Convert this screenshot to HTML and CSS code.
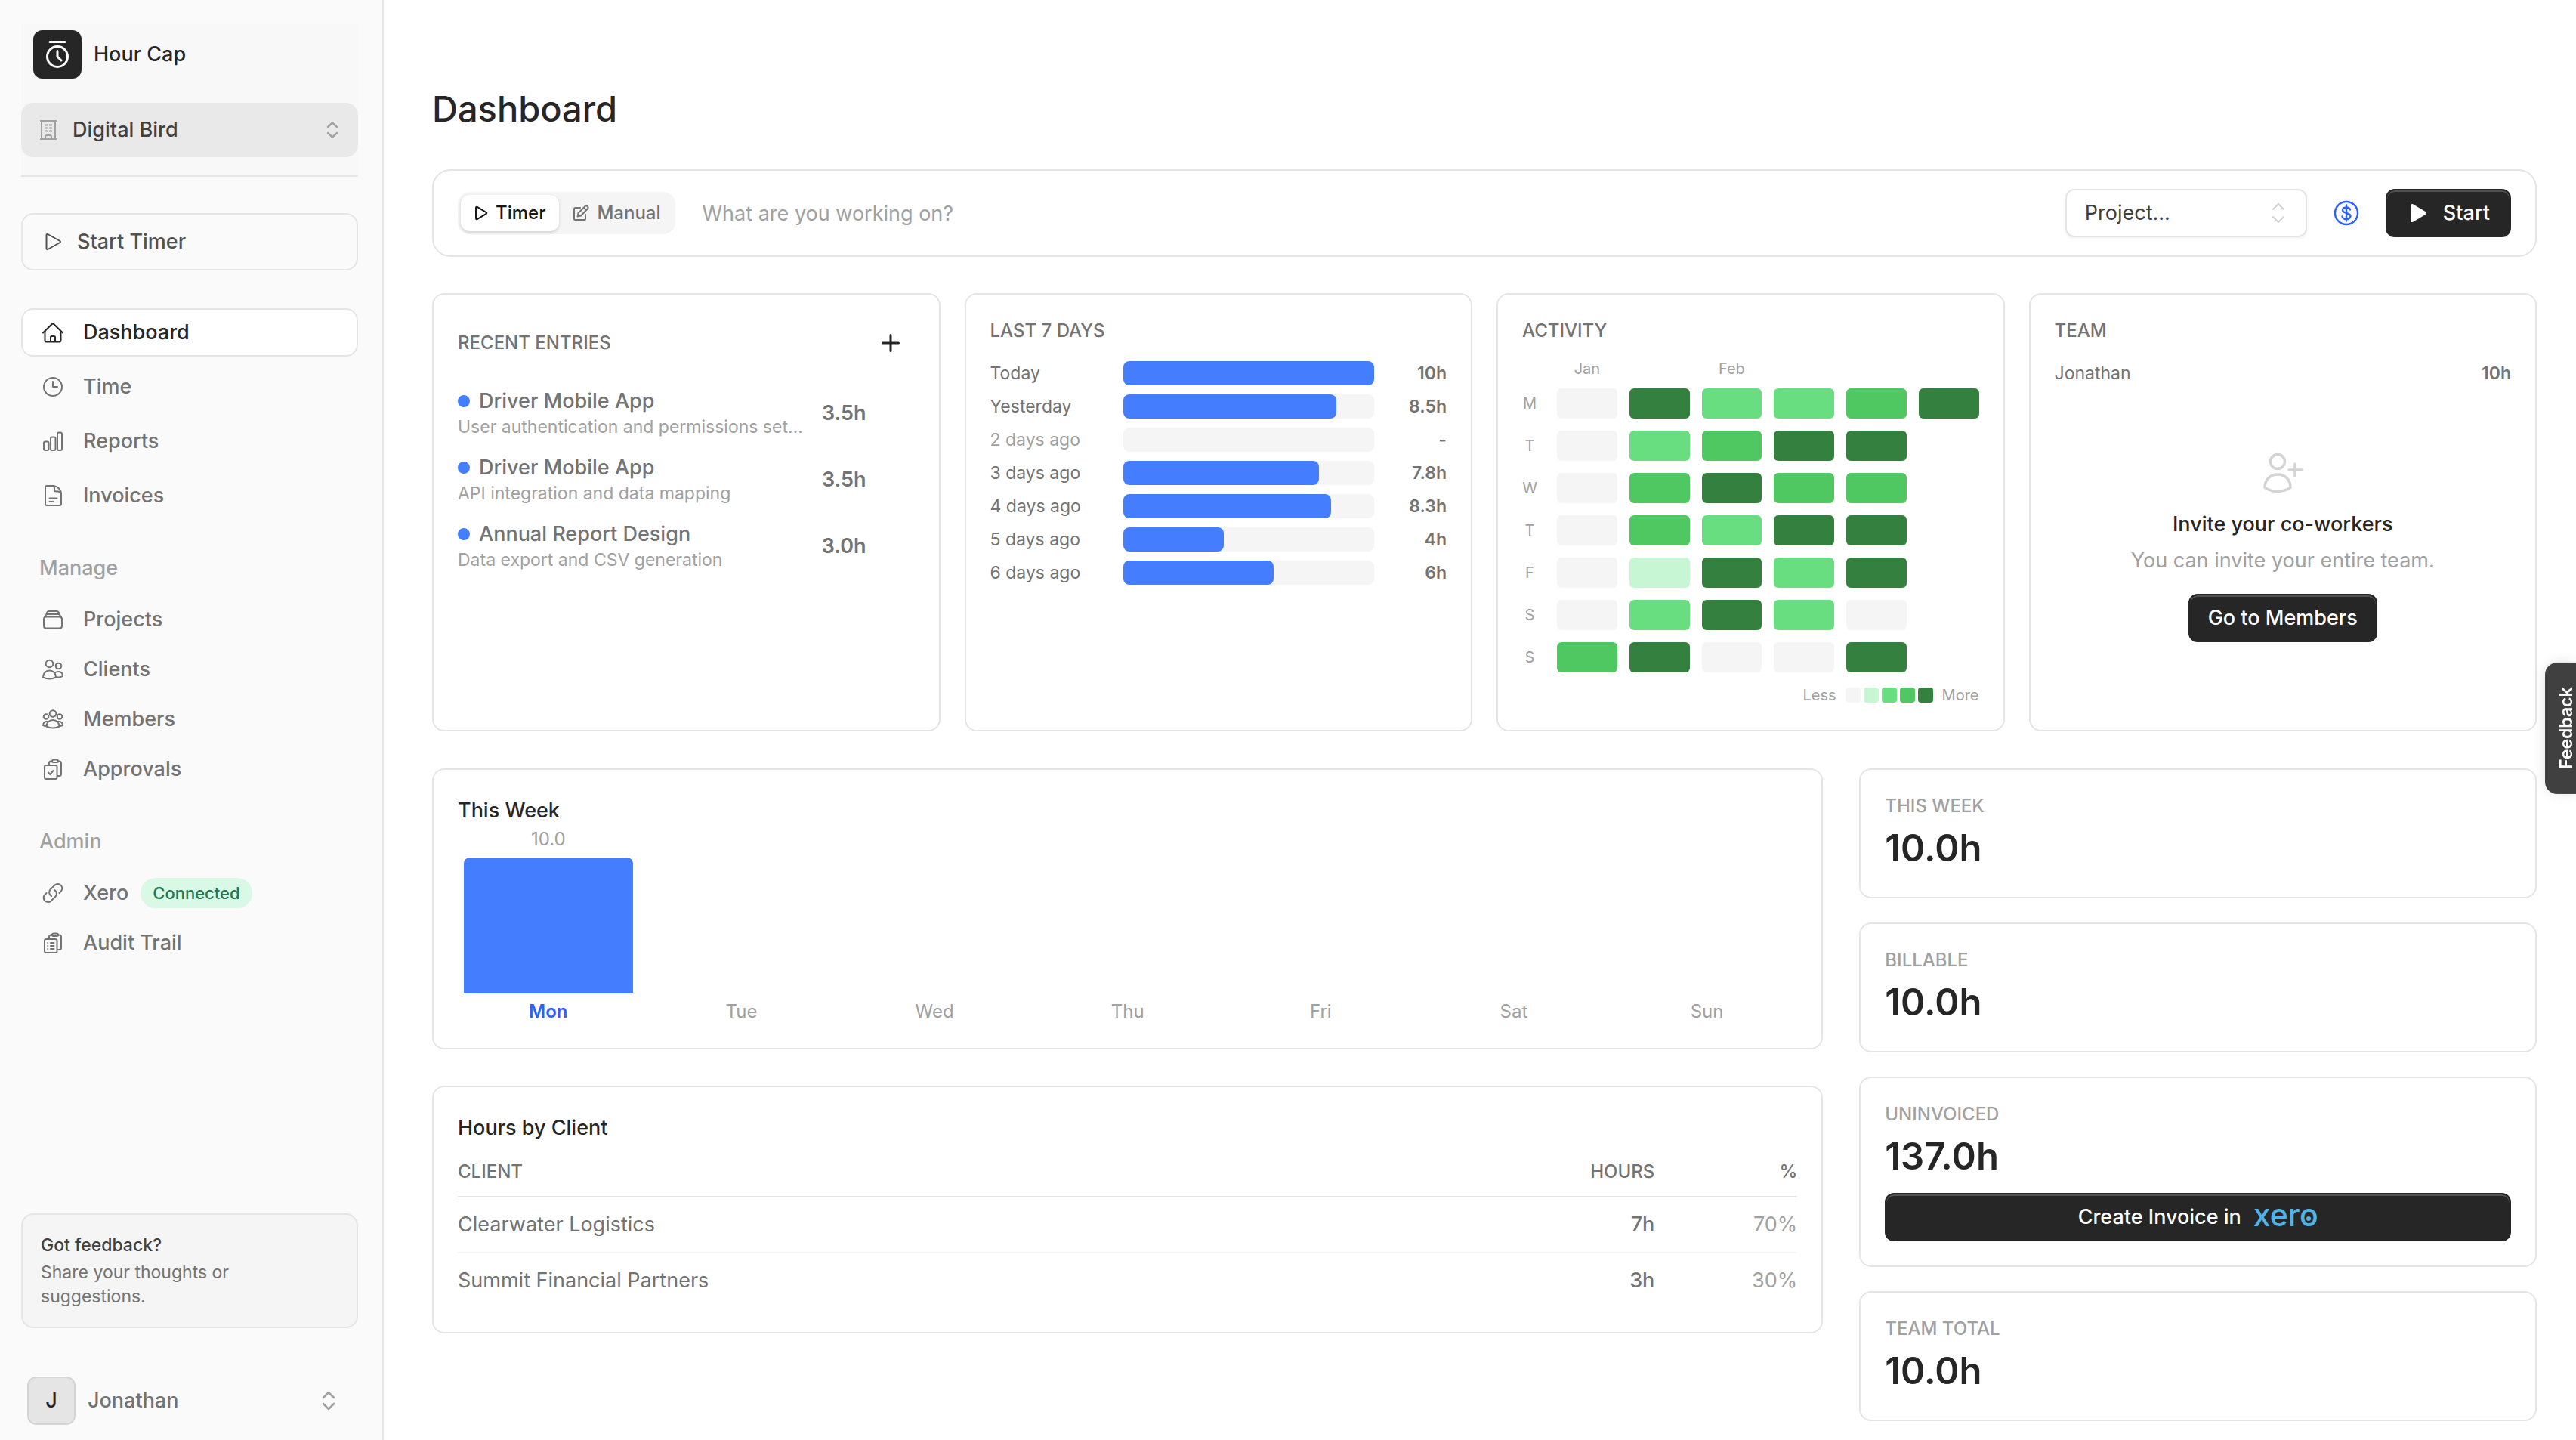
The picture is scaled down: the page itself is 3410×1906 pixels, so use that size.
FILE: index.html
```html
<!DOCTYPE html>
<html lang="en">
<head>
    <meta charset="UTF-8">
    <meta name="viewport" content="width=device-width, initial-scale=1.0">
    <title>Dashboard - Hour Cap</title>
    <link rel="stylesheet" href="styles.css">
</head>
<body>
    <aside class="sidebar">
        <div class="sidebar-header">
            <div class="brand">
                <span class="brand-logo">
                    <svg width="32" height="40" viewBox="0 0 32 40" fill="none" stroke="#fff" stroke-width="3" stroke-linecap="round" stroke-linejoin="round">
                        <path d="M6 3.5h20"/>
                        <circle cx="16" cy="23" r="13.5"/>
                        <path d="M16 15.5V23l5 5"/>
                    </svg>
                </span>
                <span class="brand-name">Hour Cap</span>
            </div>
            <button class="org-button" type="button">
                <svg class="org-icon" width="24" height="28" viewBox="0 0 24 28" fill="none" stroke="currentColor" stroke-width="2">
                    <path d="M1 2h22M1 26h22M3 2v24M21 2v24M8 26v-3a2 2 0 0 1 2-2h4a2 2 0 0 1 2 2v3"/>
                    <path d="M7 7.500h4M13 7.500h4M7 11.500h4M13 11.500h4M7 15.500h4M13 15.500h4"/>
                </svg>
                <span>Digital Bird</span>
                <svg class="chevrons" width="16" height="24" viewBox="0 0 16 24" fill="none" stroke="currentColor" stroke-width="2.4" stroke-linecap="round" stroke-linejoin="round">
                    <path d="M2 8l6-5.500L14 8M2 16l6 5.500 6-5.500"/>
                </svg>
            </button>
        </div>

        <button class="start-timer" type="button">
            <svg width="22" height="24" viewBox="0 0 22 24" fill="none" stroke="currentColor" stroke-width="2" stroke-linejoin="round">
                <path d="M1.500 3.200v17.600c0 1 .9 1.600 1.800 1.200l16-9c.9-.5.9-1.500 0-2l-16-9c-.9-.4-1.800.2-1.800 1.200z"/>
            </svg>
            <span>Start Timer</span>
        </button>

        <nav class="nav nav-main">
            <a class="nav-link active" href="#">
                <svg width="28" height="28" viewBox="0 0 28 28" fill="none" stroke="currentColor" stroke-width="2" stroke-linecap="round" stroke-linejoin="round">
                    <path d="M1 14.500L12.500 3.200a2.100 2.100 0 0 1 3 0L27 14.500"/>
                    <path d="M3.500 12.500V25a1.500 1.500 0 0 0 1.500 1.500h18a1.500 1.500 0 0 0 1.500-1.500V12.500M11 26.500v-6a1.500 1.500 0 0 1 1.500-1.500h3a1.500 1.500 0 0 1 1.500 1.500v6"/>
                </svg>
                <span>Dashboard</span>
            </a>
            <a class="nav-link" href="#">
                <svg width="28" height="28" viewBox="0 0 28 28" fill="none" stroke="currentColor" stroke-width="2" stroke-linecap="round" stroke-linejoin="round">
                    <circle cx="14" cy="14" r="12"/>
                    <path d="M14 7v7h6"/>
                </svg>
                <span>Time</span>
            </a>
            <a class="nav-link" href="#">
                <svg width="28" height="28" viewBox="0 0 28 28" fill="none" stroke="currentColor" stroke-width="2">
                    <rect x="2" y="14.500" width="6.500" height="11.500" rx="2"/>
                    <rect x="11" y="8.500" width="6.500" height="17.500" rx="2"/>
                    <rect x="20" y="2.500" width="6" height="23.500" rx="2"/>
                </svg>
                <span>Reports</span>
            </a>
            <a class="nav-link" href="#">
                <svg width="28" height="28" viewBox="0 0 28 28" fill="none" stroke="currentColor" stroke-width="2" stroke-linecap="round" stroke-linejoin="round">
                    <path d="M4 3a2 2 0 0 1 2-2h7.500C20 1 25 6 25 12.500V25a2 2 0 0 1-2 2H6a2 2 0 0 1-2-2z"/>
                    <path d="M13.500 1c2 0 2.500 1.500 2.500 3v2.500a2 2 0 0 0 2 2h2.500c3 0 4.500 1.500 4.500 4M9.500 17.500h10M9.500 22h5"/>
                </svg>
                <span>Invoices</span>
            </a>
        </nav>

        <h2 class="nav-title">Manage</h2>
        <nav class="nav">
            <a class="nav-link" href="#">
                <svg width="28" height="28" viewBox="0 0 28 28" fill="none" stroke="currentColor" stroke-width="2" stroke-linecap="round" stroke-linejoin="round">
                    <rect x="2" y="10.500" width="24" height="15" rx="3"/>
                    <path d="M3 11.500l1-2.500a3 3 0 0 1 2.500-2h15a3 3 0 0 1 2.500 2l1 2.500M5.500 7l.5-1.500a3 3 0 0 1 2.800-2.500h10.400A3 3 0 0 1 22 5.500l.5 1.500"/>
                </svg>
                <span>Projects</span>
            </a>
            <a class="nav-link" href="#">
                <svg width="28" height="28" viewBox="0 0 28 28" fill="none" stroke="currentColor" stroke-width="2" stroke-linecap="round" stroke-linejoin="round">
                    <circle cx="9.500" cy="6.500" r="4.800"/>
                    <circle cx="21.500" cy="9.500" r="3.800"/>
                    <path d="M1 24.500C1 19 4.500 15.500 9.500 15.500S18 19 18 24.500c-5 2.300-12 2.300-17 0z"/>
                    <path d="M16.500 18.500c1.300-1 3-1.500 5-1.500 3.500 0 5.500 2.500 5.500 6-2.500 1.500-6 1.500-9 1.300"/>
                </svg>
                <span>Clients</span>
            </a>
            <a class="nav-link" href="#">
                <svg width="28" height="28" viewBox="0 0 28 28" fill="none" stroke="currentColor" stroke-width="2" stroke-linecap="round" stroke-linejoin="round">
                    <circle cx="14" cy="6.500" r="4.300"/>
                    <circle cx="5" cy="10.500" r="3.300"/>
                    <circle cx="23" cy="10.500" r="3.300"/>
                    <path d="M5.500 23.500c0-5 3.500-8.500 8.500-8.500s8.500 3.500 8.500 8.500c-5 2.700-12 2.700-17 0z"/>
                    <path d="M7 17c-3.500-.5-6 1.700-6 5 1.300.6 2.800.8 4.500.9M21 17c3.500-.5 6 1.700 6 5-1.300.6-2.800.8-4.500.9"/>
                </svg>
                <span>Members</span>
            </a>
            <a class="nav-link" href="#">
                <svg width="28" height="28" viewBox="0 0 28 28" fill="none" stroke="currentColor" stroke-width="2" stroke-linecap="round" stroke-linejoin="round">
                    <rect x="3" y="9" width="16.500" height="18" rx="2"/>
                    <path d="M9 8.500V6a2.500 2.500 0 0 1 2.500-2.500H13M21 3.500h1.500A2.500 2.500 0 0 1 25 6v14.500a2.500 2.500 0 0 1-2.500 2.500H20"/>
                    <path d="M13 3.500a2 2 0 0 1 2-2h4a2 2 0 0 1 2 2v0a1.500 1.500 0 0 1-1.500 1.500h-5A1.500 1.500 0 0 1 13 3.500zM8 18.500l2.300 2.500 4.200-5"/>
                </svg>
                <span>Approvals</span>
            </a>
        </nav>

        <h2 class="nav-title">Admin</h2>
        <nav class="nav">
            <a class="nav-link" href="#">
                <svg width="28" height="28" viewBox="0 0 28 28" fill="none" stroke="currentColor" stroke-width="2" stroke-linecap="round" stroke-linejoin="round">
                    <path d="M12 18a5.500 5.500 0 0 1-1.500-8.500l6-6a5.800 5.800 0 0 1 8.200 8.200l-2.200 2.300"/>
                    <path d="M16 10a5.500 5.500 0 0 1 1.500 8.500l-6 6a5.800 5.800 0 0 1-8.200-8.200L5.500 14"/>
                </svg>
                <span>Xero</span>
                <span class="badge">Connected</span>
            </a>
            <a class="nav-link" href="#">
                <svg width="28" height="28" viewBox="0 0 28 28" fill="none" stroke="currentColor" stroke-width="2" stroke-linecap="round" stroke-linejoin="round">
                    <rect x="3" y="9" width="16.500" height="18" rx="2"/>
                    <path d="M9 8.500V6a2.500 2.500 0 0 1 2.500-2.500H13M21 3.500h1.500A2.500 2.500 0 0 1 25 6v14.500a2.500 2.500 0 0 1-2.500 2.500H20"/>
                    <path d="M13 3.500a2 2 0 0 1 2-2h4a2 2 0 0 1 2 2v0a1.500 1.500 0 0 1-1.500 1.500h-5A1.500 1.500 0 0 1 13 3.500zM11 14h4.500M11 18h4.500M11 22h4.500M7.200 14h.1M7.200 18h.1M7.200 22h.1"/>
                </svg>
                <span>Audit Trail</span>
            </a>
        </nav>

        <div class="sidebar-footer">
            <div class="feedback-card">
                <p class="feedback-title">Got feedback?</p>
                <p class="feedback-text">Share your thoughts or<br>suggestions.</p>
            </div>
            <button class="user" type="button">
                <span class="avatar">J</span>
                <span>Jonathan</span>
                <svg class="chevrons" width="18" height="26" viewBox="0 0 18 26" fill="none" stroke="currentColor" stroke-width="2.600" stroke-linecap="round" stroke-linejoin="round">
                    <path d="M2 9l7-7 7 7M2 17l7 7 7-7"/>
                </svg>
            </button>
        </div>
    </aside>

    <main class="main">
        <h1>Dashboard</h1>

        <!-- Timer bar -->
        <form class="timer-bar">
            <div class="toggle">
                <button class="toggle-button selected" type="button">
                    <svg width="18" height="20" viewBox="0 0 18 20" fill="none" stroke="currentColor" stroke-width="2" stroke-linejoin="round">
                        <path d="M2 3v14c0 1 .9 1.500 1.700 1.100l12-7.200c.8-.5.8-1.300 0-1.800l-12-7.200C2.900 1.500 2 2 2 3z"/>
                    </svg>
                    Timer
                </button>
                <button class="toggle-button" type="button">
                    <svg width="22" height="22" viewBox="0 0 22 22" fill="none" stroke="currentColor" stroke-width="2" stroke-linecap="round" stroke-linejoin="round">
                        <path d="M10 4H3.500A1.500 1.500 0 0 0 2 5.500v13A1.500 1.500 0 0 0 3.500 20h12a1.500 1.500 0 0 0 1.500-1.500V13"/>
                        <path d="M6.500 15.500l1-4.500 9.300-9.300a1.600 1.600 0 0 1 2.300 0l1 1a1.600 1.600 0 0 1 0 2.300L11 14.500zM15 4l3 3"/>
                    </svg>
                    Manual
                </button>
            </div>
            <input class="task-input" type="text" aria-label="Task" placeholder="What are you working on?">
            <div class="select-wrap">
                <select class="project-select" aria-label="Project">
                    <option>Project...</option>
                </select>
                <svg class="select-arrows" width="20" height="28" viewBox="0 0 20 28" fill="none" stroke="currentColor" stroke-width="2.400" stroke-linecap="round" stroke-linejoin="round">
                    <path d="M3 9l7-7 7 7M3 19l7 7 7-7"/>
                </svg>
            </div>
            <button class="billable" type="button" aria-label="Billable">
                <svg width="34" height="34" viewBox="0 0 34 34" fill="none" stroke="currentColor" stroke-width="2.400" stroke-linecap="round" stroke-linejoin="round">
                    <circle cx="17" cy="17" r="15"/>
                    <path d="M17 6.500v21M22 12.500c-.5-2-2.500-3-5-3s-5 1.200-5 3.500c0 2.500 2.500 3.200 5 4s5.500 1.500 5.500 4-2.500 4-5.500 4-5-1.300-5.500-3.500"/>
                </svg>
            </button>
            <button class="button start-button" type="button">
                <svg width="22" height="26" viewBox="0 0 22 26" fill="currentColor">
                    <path d="M1 3v20c0 1.800 1.700 2.600 3.200 1.800l16-9.500c1.700-1 1.700-3.600 0-4.600l-16-9.500C2.700.4 1 1.200 1 3z"/>
                </svg>
                Start
            </button>
        </form>

        <section class="top-cards">
            <div class="card">
                <div class="recent-header">
                    <h3 class="card-label">Recent Entries</h3>
                    <button class="add-button" type="button" aria-label="Add entry">
                        <svg width="24" height="24" viewBox="0 0 24 24" fill="none" stroke="currentColor" stroke-width="3" stroke-linecap="round">
                            <path d="M12 1.500v21M1.500 12h21"/>
                        </svg>
                    </button>
                </div>
                <ul class="entries">
                    <li class="entry">
                        <div>
                            <p class="entry-name"><span class="dot"></span>Driver Mobile App</p>
                            <p class="entry-note">User authentication and permissions set…</p>
                        </div>
                        <span class="entry-time">3.5h</span>
                    </li>
                    <li class="entry">
                        <div>
                            <p class="entry-name"><span class="dot"></span>Driver Mobile App</p>
                            <p class="entry-note">API integration and data mapping</p>
                        </div>
                        <span class="entry-time">3.5h</span>
                    </li>
                    <li class="entry">
                        <div>
                            <p class="entry-name"><span class="dot"></span>Annual Report Design</p>
                            <p class="entry-note">Data export and CSV generation</p>
                        </div>
                        <span class="entry-time">3.0h</span>
                    </li>
                </ul>
            </div>

            <div class="card">
                <h3 class="card-label">Last 7 Days</h3>
                <ul class="days">
                    <li class="day"><span>Today</span><div class="track"><div class="fill" style="width: 100%"></div></div><b>10h</b></li>
                    <li class="day"><span>Yesterday</span><div class="track"><div class="fill" style="width: 85%"></div></div><b>8.5h</b></li>
                    <li class="day"><span class="muted">2 days ago</span><div class="track"></div><b>-</b></li>
                    <li class="day"><span>3 days ago</span><div class="track"><div class="fill" style="width: 78%"></div></div><b>7.8h</b></li>
                    <li class="day"><span>4 days ago</span><div class="track"><div class="fill" style="width: 83%"></div></div><b>8.3h</b></li>
                    <li class="day"><span>5 days ago</span><div class="track"><div class="fill" style="width: 40%"></div></div><b>4h</b></li>
                    <li class="day"><span>6 days ago</span><div class="track"><div class="fill" style="width: 60%"></div></div><b>6h</b></li>
                </ul>
            </div>

            <div class="card">
                <h3 class="card-label">Activity</h3>
                <div class="heatmap">
                    <span></span><span class="month">Jan</span><span></span><span class="month">Feb</span><span></span><span></span><span></span>
                    <span class="weekday">M</span><i class="l0"></i><i class="l4"></i><i class="l2"></i><i class="l2"></i><i class="l3"></i><i class="l4"></i>
                    <span class="weekday">T</span><i class="l0"></i><i class="l2"></i><i class="l3"></i><i class="l4"></i><i class="l4"></i><i></i>
                    <span class="weekday">W</span><i class="l0"></i><i class="l3"></i><i class="l4"></i><i class="l3"></i><i class="l3"></i><i></i>
                    <span class="weekday">T</span><i class="l0"></i><i class="l3"></i><i class="l2"></i><i class="l4"></i><i class="l4"></i><i></i>
                    <span class="weekday">F</span><i class="l0"></i><i class="l1"></i><i class="l4"></i><i class="l2"></i><i class="l4"></i><i></i>
                    <span class="weekday">S</span><i class="l0"></i><i class="l2"></i><i class="l4"></i><i class="l2"></i><i class="l0"></i><i></i>
                    <span class="weekday">S</span><i class="l3"></i><i class="l4"></i><i class="l0"></i><i class="l0"></i><i class="l4"></i><i></i>
                </div>
                <div class="legend">
                    <span>Less</span>
                    <div class="legend-scale"><i class="l0"></i><i class="l1"></i><i class="l2"></i><i class="l3"></i><i class="l4"></i></div>
                    <span>More</span>
                </div>
            </div>

            <div class="card">
                <h3 class="card-label">Team</h3>
                <div class="team-row"><span>Jonathan</span><b>10h</b></div>
                <div class="invite">
                    <svg width="56" height="56" viewBox="0 0 56 56" fill="none" stroke="currentColor" stroke-width="3.500" stroke-linecap="round" stroke-linejoin="round">
                        <circle cx="21" cy="13" r="9.500"/>
                        <path d="M4 47.500C4 37 11 30 21 30s17 7 17 17.500c-10 6.500-24 6.500-34 0zM44 16v16M36 24h17"/>
                    </svg>
                    <p class="invite-title">Invite your co-workers</p>
                    <p class="invite-text">You can invite your entire team.</p>
                    <button class="button" type="button">Go to Members</button>
                </div>
            </div>
        </section>

        <section class="bottom-grid">
            <div class="reports">
                <div class="card">
                    <h3 class="card-title">This Week</h3>
                    <div class="week">
                        <div class="week-day today">
                            <span class="week-value">10.0</span>
                            <div class="week-bar"><div class="week-fill" style="height: 100%"></div></div>
                            <span>Mon</span>
                        </div>
                        <div class="week-day"><span>Tue</span></div>
                        <div class="week-day"><span>Wed</span></div>
                        <div class="week-day"><span>Thu</span></div>
                        <div class="week-day"><span>Fri</span></div>
                        <div class="week-day"><span>Sat</span></div>
                        <div class="week-day"><span>Sun</span></div>
                    </div>
                </div>

                <div class="card">
                    <h3 class="card-title">Hours by Client</h3>
                    <table class="clients">
                        <thead>
                            <tr><th>Client</th><th>Hours</th><th>%</th></tr>
                        </thead>
                        <tbody>
                            <tr><td>Clearwater Logistics</td><td>7h</td><td>70%</td></tr>
                            <tr><td>Summit Financial Partners</td><td>3h</td><td>30%</td></tr>
                        </tbody>
                    </table>
                </div>
            </div>

            <div class="stats">
                <div class="card">
                    <p class="stat-label">This Week</p>
                    <p class="stat-value">10.0h</p>
                </div>
                <div class="card">
                    <p class="stat-label">Billable</p>
                    <p class="stat-value">10.0h</p>
                </div>
                <div class="card">
                    <p class="stat-label">Uninvoiced</p>
                    <p class="stat-value">137.0h</p>
                    <button class="button invoice-button" type="button">Create Invoice in <span class="xero">xer<span class="xero-o">o</span></span></button>
                </div>
                <div class="card">
                    <p class="stat-label">Team Total</p>
                    <p class="stat-value">10.0h</p>
                </div>
            </div>
        </section>
    </main>

    <button class="feedback-tab" type="button">Feedback</button>
</body>
</html>
```
FILE: styles.css
```css
* {
    box-sizing: border-box;
}

body {
    margin: 0;
    display: flex;
    min-height: 100vh;
    background-color: #fff;
    color: #262626;
    font-family: Inter, "Liberation Sans", sans-serif;
    font-size: 27px;
    line-height: 40px;
}

h1, h2, h3, p, ul {
    margin: 0;
    padding: 0;
}

ul {
    list-style: none;
}

button, input, select {
    font: inherit;
    color: inherit;
    background: none;
    border: none;
    padding: 0;
    cursor: pointer;
}

svg {
    flex-shrink: 0;
}

/* Sidebar */
.sidebar {
    display: flex;
    flex-direction: column;
    flex-shrink: 0;
    width: 508px;
    padding: 32px 32px 20px 28px;
    background-color: #fafafa;
    border-right: 2px solid #e5e5e5;
    font-weight: 500;
}

.sidebar-header {
    padding-bottom: 24px;
    background-color: #f8f8f8;
    border-bottom: 2px solid #e5e5e5;
}

.brand {
    display: flex;
    align-items: center;
    gap: 16px;
    padding: 8px 16px;
}

.brand-logo {
    display: flex;
    align-items: center;
    justify-content: center;
    width: 64px;
    height: 64px;
    background-color: #262626;
    border-radius: 12px;
}

.org-button {
    display: flex;
    align-items: center;
    gap: 20px;
    width: 100%;
    height: 72px;
    margin-top: 24px;
    padding: 0 26px 0 24px;
    background-color: #e9e9e9;
    border-radius: 16px;
    color: #404040;
    font-weight: 500;
}

.org-icon {
    color: #a1a1a1;
}

.chevrons {
    margin-left: auto;
    color: #a1a1a1;
}

.start-timer {
    display: flex;
    align-items: center;
    gap: 20px;
    height: 76px;
    margin-top: 48px;
    padding: 0 30px;
    border: 2px solid #e5e5e5;
    border-radius: 16px;
    color: #525252;
}

.nav {
    display: flex;
    flex-direction: column;
    gap: 2px;
}

.nav-main {
    gap: 8px;
    margin-top: 50px;
}

.nav-link {
    display: flex;
    align-items: center;
    gap: 26px;
    height: 64px;
    padding: 0 26px;
    border: 2px solid transparent;
    border-radius: 16px;
    color: #737373;
    text-decoration: none;
}

.nav-link.active {
    background-color: #fff;
    border-color: #e5e5e5;
    color: #262626;
}

.nav-title {
    margin: 44px 0 16px;
    padding-left: 24px;
    color: #a1a1a1;
    font-size: 27px;
    font-weight: 500;
}

.badge {
    margin-left: -10px;
    padding: 0 16px;
    background-color: #d9f8e6;
    border-radius: 20px;
    color: #26774f;
    font-size: 22px;
}

.sidebar-footer {
    margin-top: auto;
}

.feedback-card {
    padding: 24px;
    background-color: #f5f5f5;
    border: 2px solid #e5e5e5;
    border-radius: 16px;
    font-size: 23px;
    line-height: 32px;
}

.feedback-title {
    margin-bottom: 4px;
    color: #404040;
}

.feedback-text {
    color: #737373;
    font-weight: 400;
}

.user {
    display: flex;
    align-items: center;
    gap: 16px;
    width: 100%;
    margin-top: 64px;
    padding: 0 30px 0 8px;
    color: #737373;
    font-weight: 500;
}

.avatar {
    display: flex;
    align-items: center;
    justify-content: center;
    width: 64px;
    height: 64px;
    background-color: #e5e5e5;
    border: 2px solid #d4d4d4;
    border-radius: 12px;
    color: #262626;
}

/* Main column */
.main {
    flex: 1;
    min-width: 0;
    padding: 112px 52px 24px 64px;
}

h1 {
    font-size: 47px;
    line-height: 64px;
    font-weight: 500;
}

.button {
    display: flex;
    align-items: center;
    justify-content: center;
    height: 64px;
    padding: 0 24px;
    background-color: #262626;
    border: 2px solid #262626;
    border-radius: 12px;
    box-shadow: inset 0 2px 0 #525252;
    color: #fff;
    font-weight: 500;
}

.card {
    padding: 32px;
    border: 2px solid #e5e5e5;
    border-radius: 16px;
}

/* Timer bar */
.timer-bar {
    display: flex;
    align-items: center;
    height: 116px;
    margin-top: 48px;
    padding: 0 32px;
    border: 2px solid #e5e5e5;
    border-radius: 24px;
}

.toggle {
    display: flex;
    height: 56px;
    padding: 4px;
    background-color: #f5f5f5;
    border-radius: 16px;
}

.toggle-button {
    display: flex;
    align-items: center;
    gap: 10px;
    padding: 0 15px 0 18px;
    border-radius: 12px;
    color: #737373;
    font-size: 24px;
    font-weight: 500;
}

.toggle-button.selected {
    padding-right: 18px;
    background-color: #fff;
    box-shadow: 0 2px 4px rgba(0, 0, 0, 0.15);
    color: #171717;
}

.task-input {
    flex: 1;
    height: 64px;
    margin: 0 36px;
    outline: none;
}

.task-input::placeholder {
    color: #a1a1a1;
}

.select-wrap {
    position: relative;
    width: 320px;
}

.project-select {
    display: block;
    width: 100%;
    height: 64px;
    padding-left: 24px;
    appearance: none;
    background-color: #fff;
    border: 2px solid #e5e5e5;
    border-radius: 12px;
    box-shadow: 0 2px 4px rgba(0, 0, 0, 0.06);
    color: #404040;
}

.select-arrows {
    position: absolute;
    top: 18px;
    right: 28px;
    color: #d4d4d4;
    pointer-events: none;
}

.billable {
    display: flex;
    margin: 0 35px;
    color: #2b5fff;
}

.start-button {
    gap: 22px;
    padding: 0 26px 0 30px;
}

/* Top row of cards */
.top-cards {
    display: grid;
    grid-template-columns: repeat(4, minmax(0, 1fr));
    gap: 32px;
    margin-top: 48px;
}

.top-cards .card {
    display: flex;
    flex-direction: column;
}

.card-label {
    color: #737373;
    font-size: 24px;
    line-height: 32px;
    font-weight: 500;
    text-transform: uppercase;
}

.recent-header {
    display: flex;
    align-items: center;
    justify-content: space-between;
    height: 64px;
}

.add-button {
    display: flex;
    align-items: center;
    justify-content: center;
    width: 64px;
    height: 64px;
}

.entries {
    display: flex;
    flex-direction: column;
    gap: 20px;
    margin-top: 27px;
    padding-right: 64px;
}

.entry {
    display: flex;
    align-items: center;
    justify-content: space-between;
    color: #737373;
    white-space: nowrap;
}

.entry-name {
    display: flex;
    align-items: center;
    gap: 12px;
    line-height: 36px;
    font-weight: 500;
}

.dot {
    width: 16px;
    height: 16px;
    background-color: #447eff;
    border-radius: 50%;
}

.entry-note {
    color: #a1a1a1;
    font-size: 23px;
    line-height: 32px;
}

.entry-time {
    font-weight: 600;
}

.days {
    display: flex;
    flex-direction: column;
    gap: 12px;
    margin-top: 24px;
}

.day {
    display: grid;
    grid-template-columns: 160px 1fr 80px;
    gap: 16px;
    color: #737373;
    font-size: 23px;
    line-height: 32px;
}

.day b, .team-row b {
    font-weight: 600;
    text-align: right;
}

.muted {
    color: #a1a1a1;
}

.track {
    background-color: #f5f5f5;
    border-radius: 8px;
}

.fill {
    height: 32px;
    background-color: #447eff;
    border-radius: 8px;
}

.heatmap {
    display: grid;
    grid-template-columns: 30px repeat(6, 1fr);
    grid-template-rows: 20px repeat(7, 40px);
    gap: 16px;
    margin-top: 24px;
    color: #a1a1a1;
    font-size: 20px;
}

.heatmap i {
    border-radius: 6px;
}

.month {
    line-height: 20px;
    text-align: center;
}

.weekday {
    width: 20px;
    text-align: center;
}

.l0 { background-color: #f5f5f5; }
.l1 { background-color: #c7f6d4; }
.l2 { background-color: #68de80; }
.l3 { background-color: #50c862; }
.l4 { background-color: #34803f; }

.legend {
    display: flex;
    align-items: center;
    justify-content: flex-end;
    gap: 12px;
    margin-top: 16px;
    color: #a1a1a1;
    font-size: 20px;
    line-height: 28px;
}

.legend-scale {
    display: flex;
    gap: 4px;
}

.legend-scale i {
    width: 20px;
    height: 20px;
    border-radius: 4px;
}

.team-row {
    display: flex;
    justify-content: space-between;
    margin-top: 24px;
    color: #737373;
    font-size: 23px;
    line-height: 32px;
}

.invite {
    display: flex;
    flex: 1;
    flex-direction: column;
    align-items: center;
    justify-content: center;
    padding-top: 4px;
    color: #d4d4d4;
}

.invite-title {
    margin-top: 20px;
    color: #262626;
    font-weight: 500;
}

.invite-text {
    margin: 8px 0 24px;
    color: #a1a1a1;
}

/* Reports and totals */
.bottom-grid {
    display: grid;
    grid-template-columns: repeat(3, minmax(0, 1fr));
    gap: 48px;
    margin-top: 49px;
}

.reports {
    display: flex;
    flex-direction: column;
    gap: 48px;
    grid-column: span 2;
}

.card-title {
    font-size: 27px;
    line-height: 44px;
    font-weight: 500;
}

.week {
    display: flex;
    align-items: flex-end;
    gap: 16px;
}

.week-day {
    flex: 1;
    padding: 0 8px;
    color: #a1a1a1;
    font-size: 24px;
    line-height: 32px;
    text-align: center;
}

.today {
    color: #2b5fff;
    font-weight: 600;
}

.week-value {
    color: #a1a1a1;
    font-weight: 400;
}

.week-bar {
    height: 180px;
    margin: 8px 0;
}

.week-fill {
    background-color: #447eff;
    border-radius: 8px 8px 0 0;
}

.clients {
    width: 100%;
    border-collapse: separate;
    border-spacing: 0;
    color: #737373;
}

.clients th {
    padding: 20px 0 16px;
    border-bottom: 2px solid #e5e5e5;
    font-size: 24px;
    line-height: 32px;
    font-weight: 500;
    text-align: left;
    text-transform: uppercase;
}

.clients td {
    padding: 16px 0;
}

.clients tr:not(:last-child) td {
    border-bottom: 2px solid #f5f5f5;
}

.clients th:nth-child(n+2),
.clients td:nth-child(n+2) {
    width: 189px;
    text-align: right;
}

.clients td:nth-child(2) {
    font-weight: 500;
}

.clients td:nth-child(3) {
    color: #a1a1a1;
}

.stats {
    display: flex;
    flex-direction: column;
    gap: 32px;
}

.stat-label {
    color: #a1a1a1;
    font-size: 24px;
    line-height: 32px;
    font-weight: 500;
    text-transform: uppercase;
}

.stat-value {
    margin-top: 8px;
    font-size: 49px;
    line-height: 64px;
    font-weight: 600;
}

.invoice-button {
    gap: 16px;
    width: 100%;
    margin-top: 16px;
}

.xero {
    padding-bottom: 6px;
    color: #50b3e6;
    font-size: 41px;
}

.xero-o {
    position: relative;
}

.xero-o::after {
    content: "";
    position: absolute;
    left: 50%;
    bottom: 17px;
    width: 6px;
    height: 6px;
    margin-left: -3px;
    background-color: #50b3e6;
    border-radius: 50%;
}

.feedback-tab {
    position: fixed;
    top: 46%;
    right: 0;
    width: 41px;
    height: 174px;
    padding-right: 16px;
    background-color: #404040;
    border-radius: 0 16px 16px 0;
    box-shadow: 0 0 16px rgba(0, 0, 0, 0.12);
    color: #fff;
    font-size: 23px;
    line-height: 24px;
    font-weight: 600;
    text-align: center;
    writing-mode: vertical-rl;
    transform: rotate(180deg);
}
```
